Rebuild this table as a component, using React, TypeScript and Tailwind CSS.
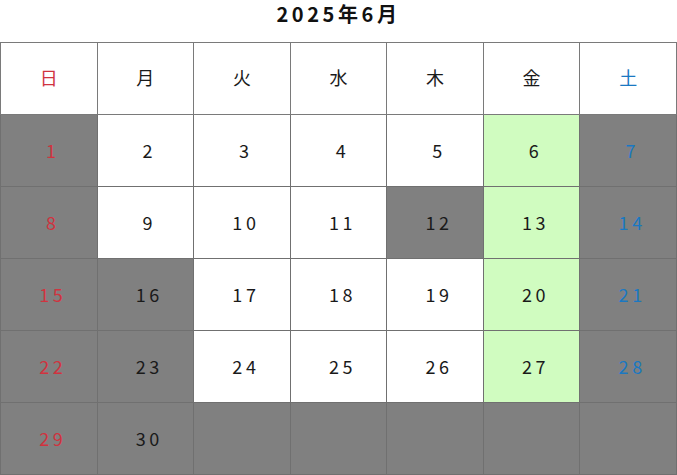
import React from 'react';

type Cell = { day?: number; bg: 'gray' | 'white' | 'green' };

const weekdays = ['日', '月', '火', '水', '木', '金', '土'];

const g = (day?: number): Cell => ({ day, bg: 'gray' });
const w = (day: number): Cell => ({ day, bg: 'white' });
const gr = (day: number): Cell => ({ day, bg: 'green' });

const weeks: Cell[][] = [
  [g(1), w(2), w(3), w(4), w(5), gr(6), g(7)],
  [g(8), w(9), w(10), w(11), g(12), gr(13), g(14)],
  [g(15), g(16), w(17), w(18), w(19), gr(20), g(21)],
  [g(22), g(23), w(24), w(25), w(26), gr(27), g(28)],
  [g(29), g(30), g(), g(), g(), g(), g()],
];

const bgClass = {
  gray: 'bg-[#808080]',
  white: 'bg-white',
  green: 'bg-[#d0fcc0]',
};

const colorFor = (col: number) =>
  col === 0 ? 'text-[#d0333f]' : col === 6 ? 'text-[#1a78c2]' : 'text-[#1a1a1a]';

export default function App() {
  return (
    <div className="w-[677px] h-[475px] bg-white font-['Noto_Sans_CJK_JP','Noto_Sans',sans-serif]">
      <h1 className="h-[42px] pt-[1px] text-center text-[20px] leading-[26px] font-bold tracking-[0.18em] text-[#111]">
        2025年6月
      </h1>
      <table className="w-full table-fixed border-collapse">
        <thead>
          <tr>
            {weekdays.map((d, i) => (
              <th
                key={d}
                className={`h-[72px] border border-[#7a7a7a] bg-white pb-[3px] text-[18px] font-normal ${colorFor(i)}`}
              >
                {d}
              </th>
            ))}
          </tr>
        </thead>
        <tbody>
          {weeks.map((week, r) => (
            <tr key={r}>
              {week.map((c, i) => (
                <td
                  key={i}
                  className={`h-[72px] border border-[#707070] ${bgClass[c.bg]} pl-[8px] text-center text-[18px] tracking-[0.2em] ${colorFor(i)}`}
                >
                  {c.day ?? ''}
                </td>
              ))}
            </tr>
          ))}
        </tbody>
      </table>
    </div>
  );
}
